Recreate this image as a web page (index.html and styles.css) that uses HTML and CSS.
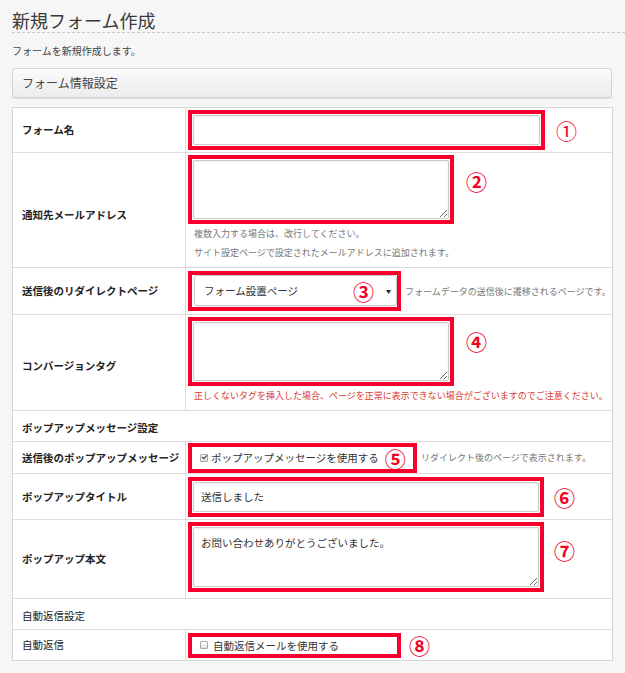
FILE: index.html
```html
<!DOCTYPE html>
<html lang="ja">
<head>
<meta charset="utf-8">
<title>新規フォーム作成</title>
<link rel="stylesheet" href="styles.css">
</head>
<body>
<div class="page">
  <h1 class="page-title">新規フォーム作成</h1>
  <p class="lead">フォームを新規作成します。</p>
  <div class="section-head">フォーム情報設定</div>

  <div class="form-table">
    <div class="row r1">
      <div class="label bold">フォーム名</div>
      <div class="value">
        <div class="line">
          <div class="mark mark-wide"><input class="text" type="text"></div>
          <span class="num num-thin n1">①</span>
        </div>
      </div>
    </div>

    <div class="row r2">
      <div class="label bold lower-a">通知先メールアドレス</div>
      <div class="value top">
        <div class="line top">
          <div class="mark mark-area"><textarea class="area"></textarea></div>
          <span class="num n2">②</span>
        </div>
        <p class="help">複数入力する場合は、改行してください。</p>
        <p class="help">サイト設定ページで設定されたメールアドレスに追加されます。</p>
      </div>
    </div>

    <div class="row r3">
      <div class="label bold">送信後のリダイレクトページ</div>
      <div class="value">
        <div class="line">
          <div class="mark mark-select">
            <div class="select">
              <span class="select-text">フォーム設置ページ</span>
              <span class="num n3">③</span>
              <span class="caret">▼</span>
            </div>
          </div>
          <span class="help inline">フォームデータの送信後に遷移されるページです。</span>
        </div>
      </div>
    </div>

    <div class="row r4">
      <div class="label bold lower-b">コンバージョンタグ</div>
      <div class="value top">
        <div class="line top">
          <div class="mark mark-area"><textarea class="area"></textarea></div>
          <span class="num n4">④</span>
        </div>
        <p class="warn">正しくないタグを挿入した場合、ページを正常に表示できない場合がございますのでご注意ください。</p>
      </div>
    </div>

    <div class="row r5 section bold">ポップアップメッセージ設定</div>

    <div class="row r6">
      <div class="label bold">送信後のポップアップメッセージ</div>
      <div class="value">
        <div class="line">
          <label class="mark mark-check">
            <input class="cb" type="checkbox" checked>
            <span class="cb-text">ポップアップメッセージを使用する</span>
            <span class="num n5">⑤</span>
          </label>
          <span class="help inline">リダイレクト後のページで表示されます。</span>
        </div>
      </div>
    </div>

    <div class="row r7">
      <div class="label bold">ポップアップタイトル</div>
      <div class="value">
        <div class="line">
          <div class="mark mark-wide2"><input class="text" type="text" value="送信しました"></div>
          <span class="num n6">⑥</span>
        </div>
      </div>
    </div>

    <div class="row r8">
      <div class="label bold">ポップアップ本文</div>
      <div class="value top">
        <div class="line top">
          <div class="mark mark-area-wide"><textarea class="area">お問い合わせありがとうございました。</textarea></div>
          <span class="num n7">⑦</span>
        </div>
      </div>
    </div>

    <div class="row r9 section">自動返信設定</div>

    <div class="row r10">
      <div class="label">自動返信</div>
      <div class="value">
        <div class="line">
          <label class="mark mark-check-sm">
            <input class="cb" type="checkbox">
            <span class="cb-text">自動返信メールを使用する</span>
          </label>
          <span class="num n8">⑧</span>
        </div>
      </div>
    </div>
  </div>
</div>
</body>
</html>
```

FILE: styles.css
```css
html, body {
  margin: 0;
  padding: 0;
}

body {
  background: #f6f6f6;
  color: #333;
  font-family: "Noto Sans CJK JP", "Noto Sans", sans-serif;
  font-size: 10.5px;
}

.page {
  padding-left: 12px;
}

.page-title {
  margin: 0;
  padding-top: 8px;
  font-size: 18px;
  font-weight: normal;
  line-height: 24px;
  color: #3a3a3a;
  border-bottom: 1px dashed #c9c9c9;
}

.lead {
  margin: 11px 0 0;
  font-size: 10px;
  line-height: 14px;
  color: #444;
}

.section-head {
  margin-top: 10px;
  width: 600px;
  height: 30px;
  box-sizing: border-box;
  padding-left: 9px;
  border: 1px solid #d3d3d3;
  border-radius: 3px;
  background: linear-gradient(#fbfbfb, #ececec);
  box-shadow: 0 1px 1px rgba(0, 0, 0, 0.12);
  font-size: 12px;
  line-height: 28px;
  color: #444;
}

.form-table {
  margin-top: 9px;
  width: 601px;
  box-sizing: border-box;
  border: 1px solid #d6d6d6;
  background: #fff;
  box-shadow: 0 1px 1px rgba(0, 0, 0, 0.1);
}

.row {
  display: grid;
  grid-template-columns: 173px 425px;
  box-sizing: border-box;
  border-bottom: 1px solid #dcdcdc;
}

.row:last-child {
  border-bottom: none;
}

.r1 { height: 45px; }
.r2 { height: 115px; }
.r3 { height: 47px; }
.r4 { height: 96px; }
.r5 { height: 31px; }
.r6 { height: 32px; }
.r7 { height: 46px; }
.r8 { height: 79px; }
.r9 { height: 31px; }
.r10 { height: 30px; }

.label {
  display: flex;
  align-items: center;
  padding-left: 9px;
  border-right: 1px solid #dcdcdc;
  color: #222;
  line-height: 14px;
  white-space: nowrap;
}

.lower-a { padding-top: 10px; box-sizing: border-box; }
.lower-b { padding-top: 6px; box-sizing: border-box; }

.bold { font-weight: bold; }

.section {
  display: flex;
  align-items: center;
  padding: 2px 0 0 9px;
  color: #222;
}

.value {
  display: flex;
  flex-direction: column;
  justify-content: center;
  padding-left: 2px;
}

.value.top {
  justify-content: flex-start;
  padding-top: 2px;
}

.line {
  display: flex;
  align-items: center;
}

.line.top {
  align-items: flex-start;
}

.mark {
  box-sizing: border-box;
  border: 4px solid #f7002c;
  padding: 1px;
}

.mark-wide { width: 357px; height: 40px; }
.mark-wide2 { width: 356px; height: 40px; }
.mark-area { width: 266px; height: 69px; }
.mark-area-wide { width: 356px; height: 70px; }

.text, .area {
  display: block;
  width: 100%;
  height: 100%;
  box-sizing: border-box;
  margin: 0;
  border: 1px solid #cbcbcb;
  border-radius: 2px;
  box-shadow: inset 0 1px 2px rgba(0, 0, 0, 0.08);
  background: #fff;
  font-family: "Noto Sans CJK JP", "Noto Sans", sans-serif;
  font-size: 10.5px;
  color: #333;
  outline: none;
}

.text {
  padding: 0 7px;
}

.area {
  padding: 7px 7px;
  line-height: 16px;
  resize: both;
}

.mark-select {
  width: 213px;
  height: 40px;
  padding: 0 0 1px 2px;
}

.select {
  display: flex;
  align-items: center;
  height: 100%;
  box-sizing: border-box;
  border: 1px solid #c8c8c8;
  border-radius: 3px;
  background: #fff;
  box-shadow: 0 1px 1px rgba(0, 0, 0, 0.08);
  padding: 0 5px 0 9px;
  font-size: 10.5px;
  color: #333;
}

.select-text {
  flex: 1;
}

.caret {
  margin-left: 12px;
  font-size: 5px;
  line-height: 6px;
  color: #222;
}

.help {
  margin: 0;
  font-size: 9px;
  line-height: 19px;
  color: #777;
  padding-left: 6px;
}

.help.inline {
  padding-left: 4px;
  white-space: nowrap;
}

.r2 .help:last-child {
  margin-bottom: 3px;
}

.warn {
  margin: 0;
  padding-left: 6px;
  font-size: 9px;
  line-height: 20px;
  color: #d83a32;
  white-space: nowrap;
}

.mark-check {
  display: flex;
  align-items: center;
  width: 229px;
  height: 30px;
  padding-left: 8px;
}

.mark-check-sm {
  display: flex;
  align-items: center;
  width: 213px;
  height: 25px;
  padding-left: 8px;
}

.cb {
  appearance: none;
  -webkit-appearance: none;
  position: relative;
  flex: none;
  width: 8px;
  height: 8px;
  margin: 0 3px 0 0;
  border: 1px solid #a8a8a8;
  border-radius: 1px;
  background: linear-gradient(#fff, #e2e2e2);
}

.cb:checked::after {
  content: "";
  position: absolute;
  left: 1.5px;
  top: -0.5px;
  width: 2px;
  height: 4px;
  border: solid #333;
  border-width: 0 1.5px 1.5px 0;
  transform: rotate(45deg);
}

.mark-check-sm .cb {
  margin-right: 5px;
}

.cb-text {
  font-size: 10.5px;
  color: #333;
  white-space: nowrap;
}

.num {
  flex: none;
  font-size: 21px;
  line-height: 20px;
  font-weight: bold;
  color: #f3001f;
}

.num-thin {
  font-weight: normal;
}

.n1 { margin-left: 11px; }
.n2 { margin-left: 12px; margin-top: 16px; }
.n3 { margin-left: 0; }
.n4 { margin-left: 12px; margin-top: 14px; }
.n5 { margin-left: 6px; }
.n6 { margin-left: 10px; }
.n7 { margin-left: 10px; margin-top: 18px; }
.n8 { margin-left: 8px; }
```
